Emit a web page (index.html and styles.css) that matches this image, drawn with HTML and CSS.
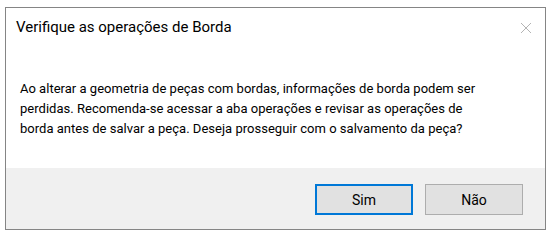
FILE: index.html
```html
<!DOCTYPE html>
<html lang="pt-BR">
<head>
<meta charset="utf-8">
<title>Verifique as operações de Borda</title>
<link rel="stylesheet" href="styles.css">
</head>
<body>
<div class="dialog">
  <div class="titlebar">
    <span class="title">Verifique as operações de Borda</span>
    <span class="close" aria-label="Fechar">
      <svg width="12" height="12" viewBox="0 0 12 12"><path d="M1 1 L11 11 M11 1 L1 11" stroke="#b4b4b4" stroke-width="1" fill="none"/></svg>
    </span>
  </div>
  <div class="content">
    <p class="message">Ao alterar a geometria de peças com bordas, informações de borda podem ser<br>perdidas. Recomenda-se acessar a aba operações e revisar as operações de<br>borda antes de salvar a peça. Deseja prosseguir com o salvamento da peça?</p>
  </div>
  <div class="footer">
    <button class="btn btn-default">Sim</button>
    <button class="btn">Não</button>
  </div>
</div>
</body>
</html>
```

FILE: styles.css
```css
html, body {
  margin: 0;
  background: #ffffff;
}
body {
  padding: 7px 0 0 5px;
  font-family: "Roboto", "Noto Sans", sans-serif;
  font-size: 14px;
  color: #000000;
}
.dialog {
  width: 539px;
  height: 221px;
  border: 1px solid #858585;
  background: #ffffff;
  display: flex;
  flex-direction: column;
}
.titlebar {
  display: flex;
  justify-content: space-between;
  align-items: center;
  padding: 7px 13px 0 10px;
  height: 23px;
}
.title {
  font-size: 15px;
  line-height: 20px;
}
.close {
  display: flex;
  width: 12px;
  height: 12px;
  margin-top: 2px;
}
.content {
  flex: 1;
  padding: 41px 14px 0 14px;
}
.message {
  margin: 0;
  font-size: 13px;
  letter-spacing: 0.02px;
  line-height: 20px;
  white-space: nowrap;
}
.footer {
  background: #f0f0f0;
  height: 61px;
  display: flex;
  justify-content: flex-end;
  align-items: flex-start;
  gap: 12px;
  padding: 16px 22px 0 0;
  box-sizing: border-box;
}
.btn {
  width: 98px;
  height: 31px;
  box-sizing: border-box;
  background: #e1e1e1;
  border: 1px solid #adadad;
  font-family: "Roboto", "Noto Sans", sans-serif;
  font-size: 14px;
  color: #000000;
  padding: 0;
}
.btn-default {
  border: 2px solid #0078d7;
}
```
